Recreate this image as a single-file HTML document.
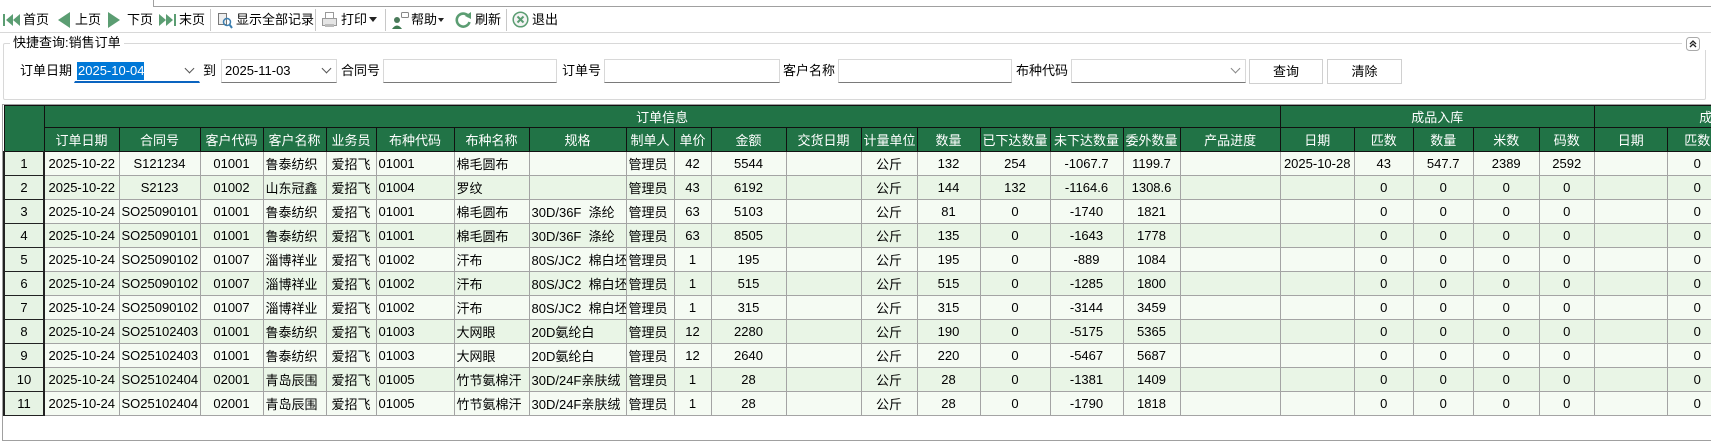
<!DOCTYPE html>
<html><head><meta charset="utf-8">
<style>
*{box-sizing:border-box;margin:0;padding:0}
body{width:1711px;height:441px;background:#fff;font-family:"Liberation Sans","Noto Sans CJK SC",sans-serif;font-size:13px;color:#000;position:relative;overflow:hidden}
.a{position:absolute;white-space:nowrap}
.tb{top:11px;height:18px;line-height:18px;font-size:13px}
.sep{position:absolute;top:9px;width:1px;height:22px;background:#c8c8c8}
.inp{position:absolute;top:59px;height:24px;background:#fff;border:1px solid #d8d8d8;border-bottom:1px solid #7a7a7a}
.lbl{position:absolute;top:62px;line-height:18px;font-size:13px}
.btn{position:absolute;top:59px;height:25px;border:1px solid #d0d0d0;background:#fff;text-align:center;line-height:23px}
.chev{position:absolute;right:6px;top:7px;width:7px;height:7px;border-right:1px solid #555;border-bottom:1px solid #555;transform:rotate(45deg)}
#grid{position:absolute;left:2px;top:104px;width:1709px;height:337px;border:1px solid #a0a0a0;border-right:none;overflow:hidden}
table{border-collapse:collapse;table-layout:fixed;width:1834px}
td,th{border:1px solid #a4a4a4;height:24px;font-weight:normal;white-space:nowrap;overflow:hidden;padding:0 2px;font-size:13px}
th{background:#217346;color:#fff;border-color:#111;text-align:center}
thead tr:first-child th{height:22px}
td{text-align:center}
td.l{text-align:left}
tbody tr:nth-child(odd) td{background:#f5fbf3}
tbody tr:nth-child(even) td{background:#e9f5e6}
tbody td.n{background:#e6f3e4!important;border:2px solid #222;border-top-width:1px;border-bottom-width:1px}
</style></head><body>
<div class="a" style="left:153px;top:0;width:1px;height:6px;background:#a0a0a0"></div>
<div class="a" style="left:153px;top:6px;width:1558px;height:1px;background:#a0a0a0"></div>
<div class="a" style="left:0;top:32px;width:1711px;height:1px;background:#d8d8d8"></div>

<svg class="a" style="left:3px;top:13px" width="17" height="14"><rect x="0" y="1" width="2" height="12" fill="#5b9d72"/><path d="M10 1 L3 7 L10 13Z M17 1 L10 7 L17 13Z" fill="#5b9d72"/></svg>
<div class="a tb" style="left:23px">首页</div>
<svg class="a" style="left:57px;top:12px" width="14" height="16"><path d="M13 0 L1 8 L13 16Z" fill="#5b9d72"/></svg>
<div class="a tb" style="left:75px">上页</div>
<svg class="a" style="left:107px;top:12px" width="14" height="16"><path d="M1 0 L13 8 L1 16Z" fill="#5b9d72"/></svg>
<div class="a tb" style="left:127px">下页</div>
<svg class="a" style="left:159px;top:13px" width="17" height="14"><path d="M0 1 L7 7 L0 13Z M7 1 L14 7 L7 13Z" fill="#5b9d72"/><rect x="15" y="1" width="2" height="12" fill="#5b9d72"/></svg>
<div class="a tb" style="left:179px">末页</div>
<div class="sep" style="left:210px"></div>
<svg class="a" style="left:217px;top:11px" width="16" height="18"><rect x="1.5" y="2.5" width="8" height="11" fill="#eee" stroke="#777"/><circle cx="10" cy="11" r="3.5" fill="none" stroke="#3c7fb0" stroke-width="1.5"/><path d="M12.5 13.5 L15 17" stroke="#3c7fb0" stroke-width="2"/></svg>
<div class="a tb" style="left:236px">显示全部记录</div>
<div class="sep" style="left:315px"></div>
<svg class="a" style="left:321px;top:11px" width="17" height="17"><rect x="4.5" y="1.5" width="8" height="6" fill="#fff" stroke="#999"/><rect x="1.5" y="7.5" width="14" height="7" fill="#e5e5e5" stroke="#999"/><rect x="4" y="13" width="9" height="3" fill="#bbb"/></svg>
<div class="a tb" style="left:341px">打印</div>
<svg class="a" style="left:369px;top:17px" width="8" height="5"><path d="M0 0 L8 0 L4 5Z" fill="#222"/></svg>
<div class="sep" style="left:385px"></div>
<svg class="a" style="left:391px;top:11px" width="18" height="18"><circle cx="6" cy="9" r="3" fill="#4a7a5a"/><path d="M1 18 Q6 11 11 18Z" fill="#3f7a52"/><rect x="10.5" y="1.5" width="7" height="5" rx="1" fill="#fff" stroke="#888"/></svg>
<div class="a tb" style="left:411px">帮助</div>
<svg class="a" style="left:438px;top:18px" width="6" height="4"><path d="M0 0 L6 0 L3 4Z" fill="#222"/></svg>
<svg class="a" style="left:455px;top:11px" width="17" height="17"><path d="M14 6 A6.5 6.5 0 1 0 14.5 11" fill="none" stroke="#5b9d72" stroke-width="2.6"/><path d="M10 5 L16 1 L16 8Z" fill="#5b9d72"/></svg>
<div class="a tb" style="left:475px">刷新</div>
<div class="sep" style="left:506px"></div>
<svg class="a" style="left:512px;top:11px" width="17" height="17"><circle cx="8.5" cy="8.5" r="7.3" fill="#f4f4f4" stroke="#5b9d72" stroke-width="1.5"/><path d="M5.5 5.5 L11.5 11.5 M11.5 5.5 L5.5 11.5" stroke="#5b9d72" stroke-width="2"/></svg>
<div class="a tb" style="left:532px">退出</div>

<div class="a" style="left:3px;top:43px;width:1703px;height:57px;border:1px solid #d8d8d8;border-radius:2px"></div>
<div class="a" style="left:10px;top:35px;background:#fff;padding:0 3px;line-height:16px;font-size:13px">快捷查询:销售订单</div>
<div class="a" style="left:1682px;top:36px;width:24px;height:14px;background:#fff"></div>
<svg class="a" style="left:1686px;top:37px" width="14" height="14"><rect x="0.5" y="0.5" width="13" height="13" rx="3" fill="#fff" stroke="#aaa"/><path d="M4 7 L7 4 L10 7 M4 10 L7 7 L10 10" fill="none" stroke="#222" stroke-width="1.3"/></svg>

<div class="lbl" style="left:20px">订单日期</div>
<div class="inp" style="left:74px;width:126px;border-color:#fff;border-bottom:2px solid #0a64c0"><div class="a" style="left:2px;top:2px;width:67px;height:18px;background:#0078d7;color:#fff;line-height:18px;padding-left:1px">2025-10-04</div><div class="chev" style="top:5px"></div></div>
<div class="lbl" style="left:203px">到</div>
<div class="inp" style="left:221px;width:116px"><div class="a" style="left:3px;top:2px;line-height:18px">2025-11-03</div><div class="chev" style="top:5px"></div></div>
<div class="lbl" style="left:341px">合同号</div>
<div class="inp" style="left:383px;width:174px"></div>
<div class="lbl" style="left:562px">订单号</div>
<div class="inp" style="left:604px;width:176px"></div>
<div class="lbl" style="left:783px">客户名称</div>
<div class="inp" style="left:838px;width:174px"></div>
<div class="lbl" style="left:1016px">布种代码</div>
<div class="inp" style="left:1071px;width:175px"><div class="chev" style="top:5px;border-color:#888"></div></div>
<div class="btn" style="left:1249px;width:74px">查询</div>
<div class="btn" style="left:1327px;width:75px">清除</div>

<div id="grid">
<table>
<colgroup>
<col style="width:40px"><col style="width:75px"><col style="width:81px"><col style="width:63px"><col style="width:63px"><col style="width:50px"><col style="width:78px"><col style="width:75px"><col style="width:97px"><col style="width:48px"><col style="width:37px"><col style="width:75px"><col style="width:75px"><col style="width:56px"><col style="width:63px"><col style="width:70px"><col style="width:73px"><col style="width:57px"><col style="width:100px"><col style="width:74px"><col style="width:59px"><col style="width:60px"><col style="width:66px"><col style="width:55px"><col style="width:73px"><col style="width:60px"><col style="width:60px"><col style="width:69px">
</colgroup>
<thead>
<tr><th rowspan="2"></th><th colspan="18">订单信息</th><th colspan="5">成品入库</th><th colspan="4">成品出库</th></tr>
<tr><th>订单日期</th><th>合同号</th><th>客户代码</th><th>客户名称</th><th>业务员</th><th>布种代码</th><th>布种名称</th><th>规格</th><th>制单人</th><th>单价</th><th>金额</th><th>交货日期</th><th>计量单位</th><th>数量</th><th>已下达数量</th><th>未下达数量</th><th>委外数量</th><th>产品进度</th><th>日期</th><th>匹数</th><th>数量</th><th>米数</th><th>码数</th><th>日期</th><th>匹数</th><th>数量</th><th>米数</th></tr>
</thead>
<tbody>
<tr><td class="n">1</td><td>2025-10-22</td><td>S121234</td><td>01001</td><td class="l">鲁泰纺织</td><td>爱招飞</td><td class="l">01001</td><td class="l">棉毛圆布</td><td class="l"></td><td class="l">管理员</td><td>42</td><td>5544</td><td></td><td>公斤</td><td>132</td><td>254</td><td>-1067.7</td><td>1199.7</td><td></td><td>2025-10-28</td><td>43</td><td>547.7</td><td>2389</td><td>2592</td><td></td><td>0</td><td>0</td><td>0</td></tr>
<tr><td class="n">2</td><td>2025-10-22</td><td>S2123</td><td>01002</td><td class="l">山东冠鑫</td><td>爱招飞</td><td class="l">01004</td><td class="l">罗纹</td><td class="l"></td><td class="l">管理员</td><td>43</td><td>6192</td><td></td><td>公斤</td><td>144</td><td>132</td><td>-1164.6</td><td>1308.6</td><td></td><td></td><td>0</td><td>0</td><td>0</td><td>0</td><td></td><td>0</td><td>0</td><td>0</td></tr>
<tr><td class="n">3</td><td>2025-10-24</td><td>SO25090101</td><td>01001</td><td class="l">鲁泰纺织</td><td>爱招飞</td><td class="l">01001</td><td class="l">棉毛圆布</td><td class="l">30D/36F&nbsp; 涤纶</td><td class="l">管理员</td><td>63</td><td>5103</td><td></td><td>公斤</td><td>81</td><td>0</td><td>-1740</td><td>1821</td><td></td><td></td><td>0</td><td>0</td><td>0</td><td>0</td><td></td><td>0</td><td>0</td><td>0</td></tr>
<tr><td class="n">4</td><td>2025-10-24</td><td>SO25090101</td><td>01001</td><td class="l">鲁泰纺织</td><td>爱招飞</td><td class="l">01001</td><td class="l">棉毛圆布</td><td class="l">30D/36F&nbsp; 涤纶</td><td class="l">管理员</td><td>63</td><td>8505</td><td></td><td>公斤</td><td>135</td><td>0</td><td>-1643</td><td>1778</td><td></td><td></td><td>0</td><td>0</td><td>0</td><td>0</td><td></td><td>0</td><td>0</td><td>0</td></tr>
<tr><td class="n">5</td><td>2025-10-24</td><td>SO25090102</td><td>01007</td><td class="l">淄博祥业</td><td>爱招飞</td><td class="l">01002</td><td class="l">汗布</td><td class="l">80S/JC2&nbsp; 棉白坯</td><td class="l">管理员</td><td>1</td><td>195</td><td></td><td>公斤</td><td>195</td><td>0</td><td>-889</td><td>1084</td><td></td><td></td><td>0</td><td>0</td><td>0</td><td>0</td><td></td><td>0</td><td>0</td><td>0</td></tr>
<tr><td class="n">6</td><td>2025-10-24</td><td>SO25090102</td><td>01007</td><td class="l">淄博祥业</td><td>爱招飞</td><td class="l">01002</td><td class="l">汗布</td><td class="l">80S/JC2&nbsp; 棉白坯</td><td class="l">管理员</td><td>1</td><td>515</td><td></td><td>公斤</td><td>515</td><td>0</td><td>-1285</td><td>1800</td><td></td><td></td><td>0</td><td>0</td><td>0</td><td>0</td><td></td><td>0</td><td>0</td><td>0</td></tr>
<tr><td class="n">7</td><td>2025-10-24</td><td>SO25090102</td><td>01007</td><td class="l">淄博祥业</td><td>爱招飞</td><td class="l">01002</td><td class="l">汗布</td><td class="l">80S/JC2&nbsp; 棉白坯</td><td class="l">管理员</td><td>1</td><td>315</td><td></td><td>公斤</td><td>315</td><td>0</td><td>-3144</td><td>3459</td><td></td><td></td><td>0</td><td>0</td><td>0</td><td>0</td><td></td><td>0</td><td>0</td><td>0</td></tr>
<tr><td class="n">8</td><td>2025-10-24</td><td>SO25102403</td><td>01001</td><td class="l">鲁泰纺织</td><td>爱招飞</td><td class="l">01003</td><td class="l">大网眼</td><td class="l">20D氨纶白</td><td class="l">管理员</td><td>12</td><td>2280</td><td></td><td>公斤</td><td>190</td><td>0</td><td>-5175</td><td>5365</td><td></td><td></td><td>0</td><td>0</td><td>0</td><td>0</td><td></td><td>0</td><td>0</td><td>0</td></tr>
<tr><td class="n">9</td><td>2025-10-24</td><td>SO25102403</td><td>01001</td><td class="l">鲁泰纺织</td><td>爱招飞</td><td class="l">01003</td><td class="l">大网眼</td><td class="l">20D氨纶白</td><td class="l">管理员</td><td>12</td><td>2640</td><td></td><td>公斤</td><td>220</td><td>0</td><td>-5467</td><td>5687</td><td></td><td></td><td>0</td><td>0</td><td>0</td><td>0</td><td></td><td>0</td><td>0</td><td>0</td></tr>
<tr><td class="n">10</td><td>2025-10-24</td><td>SO25102404</td><td>02001</td><td class="l">青岛辰围</td><td>爱招飞</td><td class="l">01005</td><td class="l">竹节氨棉汗</td><td class="l">30D/24F亲肤绒</td><td class="l">管理员</td><td>1</td><td>28</td><td></td><td>公斤</td><td>28</td><td>0</td><td>-1381</td><td>1409</td><td></td><td></td><td>0</td><td>0</td><td>0</td><td>0</td><td></td><td>0</td><td>0</td><td>0</td></tr>
<tr><td class="n">11</td><td>2025-10-24</td><td>SO25102404</td><td>02001</td><td class="l">青岛辰围</td><td>爱招飞</td><td class="l">01005</td><td class="l">竹节氨棉汗</td><td class="l">30D/24F亲肤绒</td><td class="l">管理员</td><td>1</td><td>28</td><td></td><td>公斤</td><td>28</td><td>0</td><td>-1790</td><td>1818</td><td></td><td></td><td>0</td><td>0</td><td>0</td><td>0</td><td></td><td>0</td><td>0</td><td>0</td></tr>
</tbody>
</table>
</div>
</body></html>
